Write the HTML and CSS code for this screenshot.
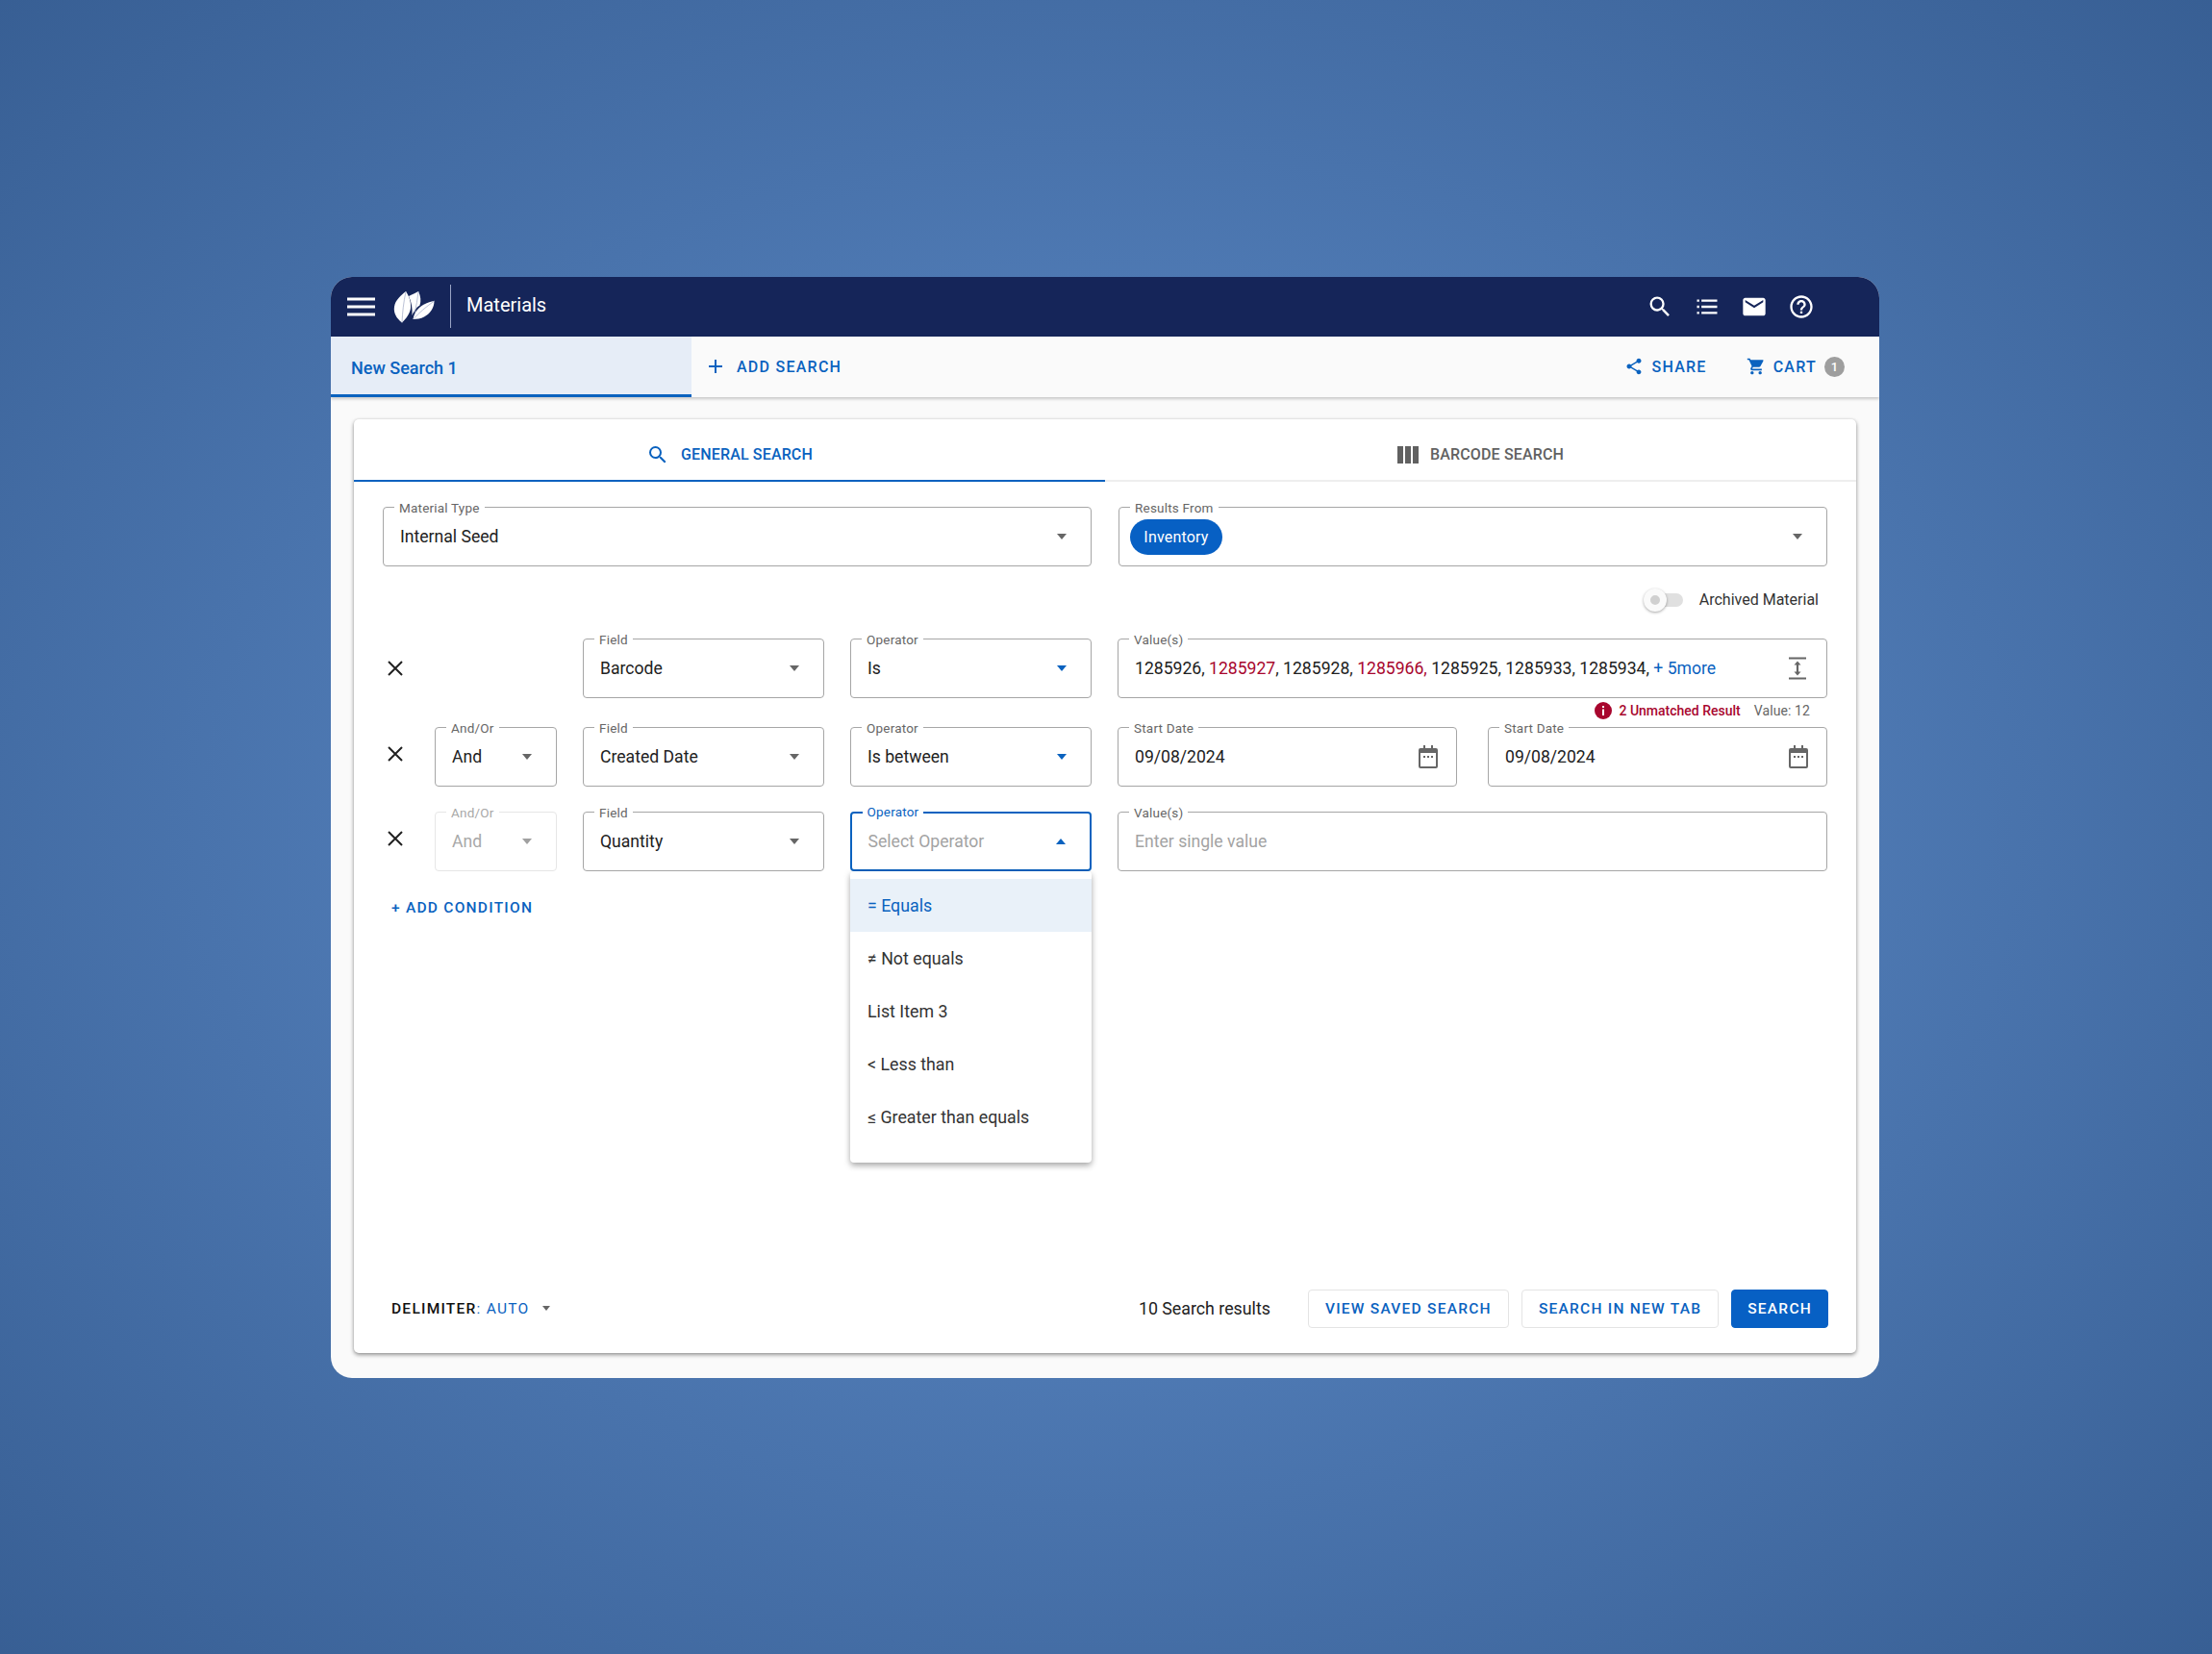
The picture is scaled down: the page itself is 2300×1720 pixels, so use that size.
FILE: index.html
```html
<!DOCTYPE html>
<html lang="en">

<head>
    <meta charset="UTF-8">
    <title>Materials</title>
    <link rel="stylesheet" href="styles.css">
</head>

<body>
    <div class="shell">
        <header class="topbar">
            <svg class="menu-icon" viewBox="0 0 29 20"><path d="M0 2h29M0 10h29M0 18h29" /></svg>
            <svg class="logo" viewBox="0 0 45 38">
                <path class="leaf" d="M17 8C21 6 25 4 27 3C29.500 8 30 13 28.500 17.500C25 19.500 22.500 23 20.500 28C21 21 20 14 17 8Z" />
                <path class="leaf" d="M21.500 32C22.500 25 27 19.500 33 16.500C36.500 14.800 40 13.500 43.500 13C43.500 20 39.500 26 33 29.500C29.500 31.300 25.500 32 21.500 32Z" />
                <path class="leaf" d="M10 35.500C4 31 1 25 2 19C3 12 9 7 14 3C17.500 8 19.500 14 19 20C18.500 26 14.500 31 10 35.500Z" />
                <path class="vein" d="M10 35.500C10.500 25 11.500 15 14 3M21.500 32C28 25 35 19 43.500 13M23 25C25 19 26 11 27 3" />
            </svg>
            <span class="divider"></span>
            <span class="app-title">Materials</span>
            <div class="top-icons">
                <svg viewBox="0 0 24 24"><path d="M15.500 14h-.79l-.28-.27A6.470 6.470 0 0 0 16 9.500 6.500 6.500 0 1 0 9.500 16c1.610 0 3.090-.59 4.230-1.570l.27.28v.79l5 4.990L20.490 19l-4.990-5zm-6 0C7.010 14 5 11.990 5 9.500S7.010 5 9.500 5 14 7.010 14 9.500 11.990 14 9.500 14z" /></svg>
                <svg viewBox="0 0 24 24"><path d="M3 5.500h2v2H3zM3 11h2v2H3zM3 16.500h2v2H3zM7 5.500h14v2H7zM7 11h14v2H7zM7 16.500h14v2H7z" /></svg>
                <svg viewBox="0 0 24 24"><path d="M20 4H4c-1.100 0-2 .9-2 2v12c0 1.100.9 2 2 2h16c1.100 0 2-.9 2-2V6c0-1.100-.9-2-2-2zm0 4-8 5-8-5V6l8 5 8-5v2z" /></svg>
                <svg viewBox="0 0 24 24"><path d="M11 18h2v-2h-2v2zm1-16C6.480 2 2 6.480 2 12s4.480 10 10 10 10-4.480 10-10S17.520 2 12 2zm0 18c-4.410 0-8-3.590-8-8s3.590-8 8-8 8 3.590 8 8-3.590 8-8 8zm0-14c-2.210 0-4 1.790-4 4h2c0-1.100.9-2 2-2s2 .9 2 2c0 2-3 1.750-3 5h2c0-2.250 3-2.500 3-5 0-2.210-1.790-4-4-4z" /></svg>
            </div>
        </header>

        <nav class="searchbar">
            <div class="search-tab">New Search 1</div>
            <a class="bar-link add-search">
                <svg class="icon-plus" viewBox="0 0 16 16"><path d="M8 1v14M1 8h14" /></svg>
                ADD SEARCH
            </a>
            <div class="bar-right">
                <a class="bar-link share">
                    <svg viewBox="0 0 24 24"><path d="M18 16.080c-.76 0-1.440.3-1.960.77L8.910 12.700c.05-.23.09-.46.09-.7s-.04-.47-.09-.7l7.050-4.110c.54.5 1.250.81 2.040.81 1.660 0 3-1.340 3-3s-1.340-3-3-3-3 1.340-3 3c0 .24.04.47.09.7L8.040 9.810C7.500 9.310 6.790 9 6 9c-1.660 0-3 1.340-3 3s1.340 3 3 3c.79 0 1.500-.31 2.040-.81l7.120 4.160c-.05.21-.08.43-.08.65 0 1.610 1.310 2.920 2.920 2.920s2.920-1.310 2.920-2.920-1.310-2.920-2.920-2.920z" /></svg>
                    SHARE
                </a>
                <a class="bar-link cart">
                    <svg viewBox="0 0 24 24"><path d="M7 18c-1.100 0-1.990.9-1.990 2S5.900 22 7 22s2-.9 2-2-.9-2-2-2zM1 2v2h2l3.600 7.590-1.350 2.450c-.16.28-.25.61-.25.96 0 1.100.9 2 2 2h12v-2H7.420c-.14 0-.25-.11-.25-.25l.03-.12.9-1.630h7.450c.75 0 1.410-.41 1.750-1.030l3.580-6.490A1 1 0 0 0 20 4H5.210l-.94-2H1zm16 16c-1.100 0-1.990.9-1.990 2s.89 2 1.990 2 2-.9 2-2-.9-2-2-2z" /></svg>
                    CART
                    <span class="badge">1</span>
                </a>
            </div>
        </nav>

        <main class="content">
            <section class="card">
                <div class="card-tabs">
                    <div class="card-tab active">
                        <svg viewBox="0 0 24 24"><path d="M15.500 14h-.79l-.28-.27A6.470 6.470 0 0 0 16 9.500 6.500 6.500 0 1 0 9.500 16c1.610 0 3.090-.59 4.230-1.570l.27.28v.79l5 4.990L20.490 19l-4.990-5zm-6 0C7.010 14 5 11.990 5 9.500S7.010 5 9.500 5 14 7.010 14 9.500 11.990 14 9.500 14z" /></svg>
                        GENERAL SEARCH
                    </div>
                    <div class="card-tab">
                        <svg viewBox="0 0 22 18"><path d="M0 0h6v18H0zM8 0h6v18H8zM16 0h6v18h-6z" /></svg>
                        BARCODE SEARCH
                    </div>
                </div>

                <div class="card-body">
                    <div class="type-row">
                        <div class="field">
                            <label>Material Type</label>
                            <span class="value">Internal Seed</span>
                            <span class="caret"></span>
                        </div>
                        <div class="field chip-field">
                            <label>Results From</label>
                            <span class="chip">Inventory</span>
                            <span class="caret"></span>
                        </div>
                    </div>

                    <div class="archive-row">
                        <span class="toggle"><span class="knob"></span></span>
                        <span>Archived Material</span>
                    </div>

                    <div class="cond-row">
                        <button class="remove"><svg viewBox="0 0 16 16"><path d="M1 1l14 14M15 1L1 15" /></svg></button>
                        <span></span>
                        <div class="field">
                            <label>Field</label>
                            <span class="value">Barcode</span>
                            <span class="caret"></span>
                        </div>
                        <div class="field">
                            <label>Operator</label>
                            <span class="value">Is</span>
                            <span class="caret blue"></span>
                        </div>
                        <div class="field">
                            <label>Value(s)</label>
                            <span class="value">1285926, <em>1285927</em>, 1285928, <em>1285966,</em> 1285925, 1285933, 1285934, <a>+ 5more</a></span>
                            <svg class="expand" viewBox="0 0 20 24"><path d="M1 1.500h18M1 22.500h18" /><path d="M10 6v12" /><path class="fill" d="M10 4.500l3.500 4h-7zM10 19.500l3.500-4h-7z" /></svg>
                        </div>
                    </div>

                    <div class="hint-row">
                        <svg class="info" viewBox="0 0 18 18"><circle cx="9" cy="9" r="9" /><path d="M8 4h2v2H8zM8 7.500h2V14H8z" /></svg>
                        <span class="unmatched">2 Unmatched Result</span>
                        <span class="count">Value: 12</span>
                    </div>

                    <div class="cond-row">
                        <button class="remove up"><svg viewBox="0 0 16 16"><path d="M1 1l14 14M15 1L1 15" /></svg></button>
                        <div class="field">
                            <label>And/Or</label>
                            <span class="value">And</span>
                            <span class="caret"></span>
                        </div>
                        <div class="field">
                            <label>Field</label>
                            <span class="value">Created Date</span>
                            <span class="caret"></span>
                        </div>
                        <div class="field">
                            <label>Operator</label>
                            <span class="value">Is between</span>
                            <span class="caret blue"></span>
                        </div>
                        <div class="dates">
                            <div class="field">
                                <label>Start Date</label>
                                <span class="value">09/08/2024</span>
                                <svg class="calendar" viewBox="0 0 20 24"><path d="M5 0h2v3h6V0h2v3h3a2 2 0 0 1 2 2v17a2 2 0 0 1-2 2H2a2 2 0 0 1-2-2V5a2 2 0 0 1 2-2h3zM2 8v14h16V8zM5 11h2v2H5zM9 11h2v2H9zM13 11h2v2h-2z" /></svg>
                            </div>
                            <div class="field">
                                <label>Start Date</label>
                                <span class="value">09/08/2024</span>
                                <svg class="calendar" viewBox="0 0 20 24"><path d="M5 0h2v3h6V0h2v3h3a2 2 0 0 1 2 2v17a2 2 0 0 1-2 2H2a2 2 0 0 1-2-2V5a2 2 0 0 1 2-2h3zM2 8v14h16V8zM5 11h2v2H5zM9 11h2v2H9zM13 11h2v2h-2z" /></svg>
                            </div>
                        </div>
                    </div>

                    <div class="cond-row last">
                        <button class="remove up"><svg viewBox="0 0 16 16"><path d="M1 1l14 14M15 1L1 15" /></svg></button>
                        <div class="field disabled">
                            <label>And/Or</label>
                            <span class="value">And</span>
                            <span class="caret"></span>
                        </div>
                        <div class="field">
                            <label>Field</label>
                            <span class="value">Quantity</span>
                            <span class="caret"></span>
                        </div>
                        <div class="field focused">
                            <label>Operator</label>
                            <span class="value placeholder">Select Operator</span>
                            <span class="caret blue open"></span>
                            <ul class="menu">
                                <li class="selected">= Equals</li>
                                <li>≠ Not equals</li>
                                <li>List Item 3</li>
                                <li>&lt; Less than</li>
                                <li>≤ Greater than equals</li>
                            </ul>
                        </div>
                        <div class="field">
                            <label>Value(s)</label>
                            <span class="value placeholder">Enter single value</span>
                        </div>
                    </div>

                    <a class="add-condition">+ ADD CONDITION</a>

                    <footer class="card-footer">
                        <div class="delimiter">DELIMITER<a>: AUTO</a><span class="caret small"></span></div>
                        <div class="actions">
                            <span class="results">10 Search results</span>
                            <button class="btn">VIEW SAVED SEARCH</button>
                            <button class="btn">SEARCH IN NEW TAB</button>
                            <button class="btn primary">SEARCH</button>
                        </div>
                    </footer>
                </div>
            </section>
        </main>
    </div>
</body>

</html>
```

FILE: styles.css
```css
body {
    margin: 0;
    height: 100vh;
    display: flex;
    justify-content: center;
    align-items: center;
    background: radial-gradient(ellipse 72% 72% at 50% 50%, #5481ba 0%, #4e79b3 45%, #375e93 100%);
    font-family: Roboto, "Liberation Sans", sans-serif;
    color: #212121;
}

.shell {
    width: 1610px;
    height: 1145px;
    margin-right: 2px;
    display: flex;
    flex-direction: column;
    background: #fafafa;
    border-radius: 22px;
    overflow: hidden;
}

/* top navy bar */
.topbar {
    height: 62px;
    flex: none;
    display: flex;
    align-items: center;
    background: #152559;
    color: #fff;
}

.menu-icon {
    width: 29px;
    height: 20px;
    margin-left: 17px;
    fill: none;
    stroke: #fff;
    stroke-width: 3;
}

.logo {
    width: 45px;
    height: 38px;
    margin-left: 18px;
}

.leaf {
    fill: #fff;
}

.vein {
    fill: none;
    stroke: #a9b2cc;
    stroke-width: 0.8;
}

.divider {
    width: 1px;
    height: 45px;
    margin-left: 15px;
    background: #9aa5c4;
}

.app-title {
    margin-left: 16px;
    margin-top: -4px;
    font-size: 20px;
}

.top-icons {
    margin-left: auto;
    margin-right: 67px;
    display: flex;
    gap: 21px;
}

.top-icons svg {
    width: 28px;
    height: 28px;
    fill: #fff;
}

/* search tabs bar */
.searchbar {
    height: 63px;
    flex: none;
    display: flex;
    align-items: center;
    box-sizing: border-box;
    background: #fafafa;
    box-shadow: 0 2px 3px rgba(0, 0, 0, 0.2);
    position: relative;
}

.search-tab {
    width: 375px;
    height: 100%;
    box-sizing: border-box;
    padding: 6px 0 0 21px;
    display: flex;
    align-items: center;
    background: #e6edf7;
    border-bottom: 3px solid #0a62bf;
    color: #0a62bf;
    font-size: 18px;
    font-weight: 500;
}

.bar-link {
    display: flex;
    align-items: center;
    color: #0a62bf;
    font-size: 16px;
    font-weight: 500;
    letter-spacing: 1.25px;
}

.add-search {
    margin-left: 17px;
    gap: 14px;
}

.icon-plus {
    width: 16px;
    height: 16px;
    fill: none;
    stroke: #0a62bf;
    stroke-width: 2;
}

.bar-right {
    margin-left: auto;
    margin-right: 36px;
    display: flex;
    gap: 41px;
}

.bar-link svg {
    fill: #0a62bf;
}

.share svg,
.cart svg {
    width: 20px;
    height: 20px;
}

.share {
    gap: 9px;
}

.cart {
    gap: 8px;
}

.badge {
    width: 21px;
    height: 21px;
    display: flex;
    align-items: center;
    justify-content: center;
    border-radius: 50%;
    background: #9e9e9e;
    color: #fff;
    font-size: 13px;
    letter-spacing: 0;
}

/* main card */
.content {
    flex: 1;
    display: flex;
    padding: 23px 24px 26px;
    min-height: 0;
}

.card {
    flex: 1;
    display: flex;
    flex-direction: column;
    background: #fff;
    border-radius: 5px;
    box-shadow: 0 2px 4px rgba(0, 0, 0, 0.4), 0 0 3px rgba(0, 0, 0, 0.1);
}

.card-tabs {
    height: 65px;
    flex: none;
    display: flex;
}

.card-tab {
    flex: 1;
    display: flex;
    align-items: center;
    justify-content: center;
    gap: 12px;
    box-sizing: border-box;
    padding-top: 11px;
    border-bottom: 2px solid #eee;
    color: #616161;
    font-size: 16px;
    font-weight: 500;
    letter-spacing: 0.15px;
}

.card-tab svg {
    width: 24px;
    height: 24px;
    fill: #616161;
}

.card-tab.active {
    border-bottom-color: #0a62bf;
    color: #0a62bf;
}

.card-tab.active svg {
    fill: #0a62bf;
}

.card-tab:last-child svg {
    width: 22px;
    height: 18px;
}

.card-body {
    flex: 1;
    display: flex;
    flex-direction: column;
    padding: 26.500px 30px 26px;
}

/* outlined field with the label sitting on the border */
.field {
    position: relative;
    height: 62px;
    box-sizing: border-box;
    display: flex;
    align-items: center;
    padding: 0 17px;
    border: 1.5px solid #a6a6a6;
    border-radius: 4px;
    font-size: 17.600px;
    background: #fff;
}

.field label {
    position: absolute;
    top: -8px;
    left: 11px;
    padding: 0 5px;
    background: #fff;
    color: #666;
    font-size: 13.500px;
    line-height: 16px;
    letter-spacing: 0.2px;
}

.value {
    white-space: nowrap;
}

.value em {
    font-style: normal;
    color: #a8062e;
}

.value a {
    color: #0a62bf;
}

.placeholder {
    color: #a3a3a3;
}

.caret {
    margin-left: auto;
    margin-right: 8px;
    width: 0;
    height: 0;
    flex: none;
    border-left: 5.500px solid transparent;
    border-right: 5.500px solid transparent;
    border-top: 6px solid #666;
}

.caret.blue {
    border-top-color: #0a62bf;
}

.caret.open {
    border-top: 0;
    border-bottom: 6px solid #0a62bf;
}

.caret.small {
    margin: 0 0 0 12px;
    border-left-width: 4.500px;
    border-right-width: 4.500px;
    border-top-width: 5px;
}

.type-row {
    display: grid;
    grid-template-columns: 737px 737px;
    column-gap: 28px;
}

.chip-field {
    padding-left: 11px;
}

.chip {
    height: 37px;
    width: 96px;
    display: flex;
    align-items: center;
    justify-content: center;
    border-radius: 19px;
    background: #0760c4;
    color: #fff;
    font-size: 16px;
    letter-spacing: 0.2px;
}

.archive-row {
    height: 74.500px;
    box-sizing: border-box;
    padding: 0 9px 5px 0;
    display: flex;
    align-items: center;
    justify-content: flex-end;
    gap: 17px;
    font-size: 16px;
    color: #333;
}

.toggle {
    position: relative;
    width: 35px;
    height: 14px;
    border-radius: 7px;
    background: #e0e0e0;
}

.knob {
    position: absolute;
    left: -6px;
    top: -5px;
    width: 24px;
    height: 24px;
    box-sizing: border-box;
    border: 7px solid #fafafa;
    border-radius: 50%;
    background: #d0d0d0;
    box-shadow: 0 1px 3px rgba(0, 0, 0, 0.35);
}

.cond-row {
    display: grid;
    grid-template-columns: 27px 127px 251px 251px 1fr;
    column-gap: 27px;
}

.cond-row.last {
    margin-top: 26.500px;
}

.dates {
    display: grid;
    grid-template-columns: 1fr 1fr;
    column-gap: 32px;
}

.remove {
    padding: 0 0 0 5px;
    border: 0;
    background: none;
    display: flex;
    align-items: center;
}

.remove svg {
    width: 16px;
    height: 16px;
    fill: none;
    stroke: #212121;
    stroke-width: 2;
}

.remove.up {
    padding-bottom: 6px;
}

.expand {
    margin-left: auto;
    margin-right: 3px;
    width: 20px;
    height: 24px;
    flex: none;
    fill: none;
    stroke: #666;
    stroke-width: 2.200;
}

.expand .fill {
    fill: #666;
    stroke: none;
}

.calendar {
    margin-left: auto;
    margin-right: 2px;
    width: 20px;
    height: 24px;
    flex: none;
    fill: #666;
}

.hint-row {
    height: 30px;
    display: flex;
    justify-content: flex-end;
    align-items: flex-start;
    padding: 4px 18px 0 0;
    box-sizing: border-box;
    font-size: 14px;
    line-height: 18px;
}

.info {
    width: 18px;
    height: 18px;
    margin-right: 7px;
}

.info circle {
    fill: #a8062e;
}

.info path {
    fill: #fff;
}

.unmatched {
    color: #a8062e;
    font-weight: 500;
}

.count {
    margin-left: 14px;
    color: #666;
    letter-spacing: 0.1px;
}

.field.disabled {
    border-color: #e6e6e6;
}

.field.disabled label,
.field.disabled .value {
    color: #a8a8a8;
}

.field.disabled .caret {
    border-top-color: #a0a0a0;
}

.field.focused {
    border: 2px solid #0a62bf;
    padding-left: 16.500px;
}

.field.focused label {
    top: -10px;
    left: 10.500px;
    color: #0a62bf;
}

.menu {
    position: absolute;
    z-index: 2;
    top: 60px;
    left: -2px;
    right: -2px;
    margin: 0;
    padding: 8px 0 20px;
    list-style: none;
    background: #fff;
    border-radius: 4px;
    box-shadow: 0 3px 6px rgba(0, 0, 0, 0.35);
    color: #333;
    font-size: 17.800px;
}

.menu li {
    height: 55px;
    display: flex;
    align-items: center;
    padding-left: 18px;
}

.menu .selected {
    background: #e9f1f9;
    color: #0a62bf;
}

.add-condition {
    margin: 29px 0 0 9px;
    color: #0a62bf;
    font-size: 15.500px;
    font-weight: 500;
    letter-spacing: 1.25px;
}

.card-footer {
    margin-top: auto;
    display: flex;
    align-items: center;
    justify-content: space-between;
}

.delimiter {
    margin-left: 9px;
    display: flex;
    align-items: center;
    font-size: 15.500px;
    font-weight: 500;
    letter-spacing: 1.25px;
    color: #111;
}

.delimiter a {
    color: #0a62bf;
    font-weight: 400;
}

.delimiter .caret {
    margin-left: 14px;
}

.actions {
    display: flex;
    align-items: center;
    gap: 13px;
    margin-right: -1px;
}

.results {
    margin-right: 26px;
    font-size: 17.800px;
}

.btn {
    height: 40px;
    padding: 0 17px;
    background: #fff;
    border: 1.5px solid #e4e4e4;
    border-radius: 4px;
    color: #0a62bf;
    font-family: inherit;
    font-size: 15.500px;
    font-weight: 500;
    letter-spacing: 1.25px;
}

.btn.primary {
    padding: 0 16px;
    background: #0760c4;
    border-color: #0760c4;
    color: #fff;
}
```
